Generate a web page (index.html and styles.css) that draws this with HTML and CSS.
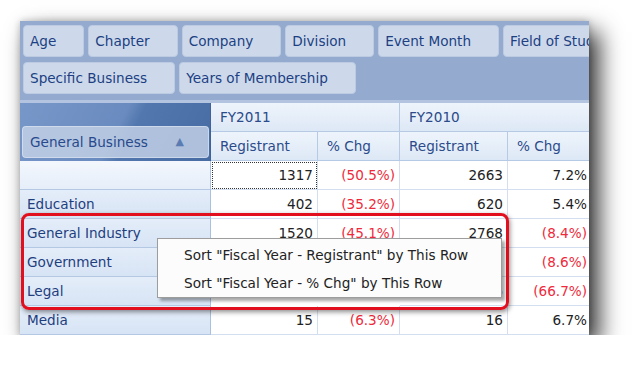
FILE: index.html
```html
<!DOCTYPE html>
<html>
    <head>
        <link rel="stylesheet" href="styles.css">
    </head>
    <body>
        <div id="pivot">
            <div id="fields">
                <div class="field-row">
                    <div class="field">Age</div>
                    <div class="field">Chapter</div>
                    <div class="field">Company</div>
                    <div class="field">Division</div>
                    <div class="field">Event Month</div>
                    <div class="field">Field of Study</div>
                </div>
                <div class="field-row">
                    <div class="field">Specific Business</div>
                    <div class="field">Years of Membership</div>
                </div>
            </div>
            <div id="grid">
                <div class="corner">
                    <div class="row-field">General Business <span class="sort">&#9650;</span></div>
                </div>
                <div class="head year">FY2011</div>
                <div class="head year">FY2010</div>
                <div class="head">Registrant</div>
                <div class="head">% Chg</div>
                <div class="head">Registrant</div>
                <div class="head">% Chg</div>

                <div class="label blank"></div>
                <div class="cell focus">1317</div>
                <div class="cell neg">(50.5%)</div>
                <div class="cell">2663</div>
                <div class="cell">7.2%</div>

                <div class="label">Education</div>
                <div class="cell">402</div>
                <div class="cell neg">(35.2%)</div>
                <div class="cell">620</div>
                <div class="cell">5.4%</div>

                <div class="label">General Industry</div>
                <div class="cell">1520</div>
                <div class="cell neg">(45.1%)</div>
                <div class="cell">2768</div>
                <div class="cell neg">(8.4%)</div>

                <div class="label">Government</div>
                <div class="cell covered">1021</div>
                <div class="cell neg covered">(12.9%)</div>
                <div class="cell">2</div>
                <div class="cell neg">(8.6%)</div>

                <div class="label">Legal</div>
                <div class="cell covered">2</div>
                <div class="cell neg covered">(66.7%)</div>
                <div class="cell">6</div>
                <div class="cell neg">(66.7%)</div>

                <div class="label">Media</div>
                <div class="cell">15</div>
                <div class="cell neg">(6.3%)</div>
                <div class="cell">16</div>
                <div class="cell">6.7%</div>
            </div>
            <div id="highlight"></div>
            <div id="menu">
                <div class="item">Sort "Fiscal Year - Registrant" by This Row</div>
                <div class="item">Sort "Fiscal Year - % Chg" by This Row</div>
            </div>
        </div>
    </body>
</html>
```

FILE: styles.css
```css
body{
    margin:0;
    background-color:#fff;
    font-family:"DejaVu Sans", sans-serif;
    font-size:13.6px;
}

#pivot{
    position:relative;
    width:569px;
    height:314px;
    margin:21px 0 0 20px;
    overflow:hidden;
    box-shadow:10px 11px 22px rgba(0,0,0,0.8), 0 0 7px rgba(0,0,0,0.22);
}

#fields{
    background-color:#94abcf;
    padding:4px 0 6px 3px;
    border-bottom:3px solid #b2c4df;
    display:flex;
    flex-direction:column;
    gap:5px;
}

#fields > .field-row{
    display:flex;
    gap:4px;
    white-space:nowrap;
}

#fields .field{
    box-sizing:border-box;
    height:32px;
    line-height:30px;
    padding:0 27px 0 6px;
    background-color:#cdd9eb;
    border:1px solid #bccbe2;
    border-radius:4px;
    color:#203f82;
    flex:none;
}

#grid{
    display:grid;
    grid-template-columns:191px 107px 82px 108px 84px;
    grid-template-rows:29px 29px;
    grid-auto-rows:29px;
}

#grid > div{
    box-sizing:border-box;
    white-space:nowrap;
}

#grid > .corner{
    grid-row:span 2;
    border-right:1px solid #3f6299;
    background:linear-gradient(118deg, #7897c9 0%, #6a8bbf 50%, #5177ae 58%, #476ca4 100%);
    display:flex;
    align-items:flex-end;
    padding:0 1px 3px 2px;
}

.row-field{
    box-sizing:border-box;
    width:100%;
    height:32px;
    line-height:30px;
    padding:0 0 0 7px;
    background-color:rgba(196,210,231,0.82);
    border:1px solid rgba(225,233,245,0.6);
    border-radius:4px;
    color:#284a8c;
    display:flex;
    justify-content:space-between;
}

.row-field > .sort{
    color:#5a7cb2;
    font-size:11px;
    margin-right:24px;
}

#grid > .head{
    background:linear-gradient(#eef4fb, #dde8f6);
    border-right:1px solid #b7cae5;
    border-bottom:1px solid #b7cae5;
    color:#2b4b8a;
    line-height:28px;
    padding-left:9px;
}

#grid > .year{
    grid-column:span 2;
}

#grid > .label{
    background:linear-gradient(#e4edf9, #d7e4f5);
    border-right:1px solid #a9c0e0;
    border-bottom:1px solid #b4c8e4;
    color:#1f3e7e;
    line-height:28px;
    padding-left:7px;
}

#grid > .label.blank{
    background:linear-gradient(#f3f7fd, #e6eef9);
}

#grid > .cell{
    background-color:#fff;
    border-right:1px solid #d3dff0;
    border-bottom:1px solid #d3dff0;
    color:#222;
    text-align:right;
    line-height:28px;
    padding-right:4px;
}

#grid > .cell.neg{
    color:#ee2a3c;
}

#grid > .cell.covered{
    visibility:hidden;
}

#grid > .cell.focus{
    outline:1px dotted #333;
    outline-offset:-2px;
}

#highlight{
    position:absolute;
    left:1px;
    top:192px;
    width:488px;
    height:97px;
    box-sizing:border-box;
    border:3px solid #e2101e;
    border-radius:8px;
    box-shadow:1px 2px 5px rgba(0,0,0,0.45);
}

#menu{
    position:absolute;
    left:137px;
    top:217px;
    width:345px;
    height:60px;
    box-sizing:border-box;
    padding:2px 0;
    background-color:#fcfcfc;
    border:1px solid #9d9d9d;
    box-shadow:3px 3px 3px rgba(0,0,0,0.35);
    color:#222;
}

#menu > .item{
    height:28px;
    line-height:28px;
    padding-left:26px;
    white-space:nowrap;
}
```
